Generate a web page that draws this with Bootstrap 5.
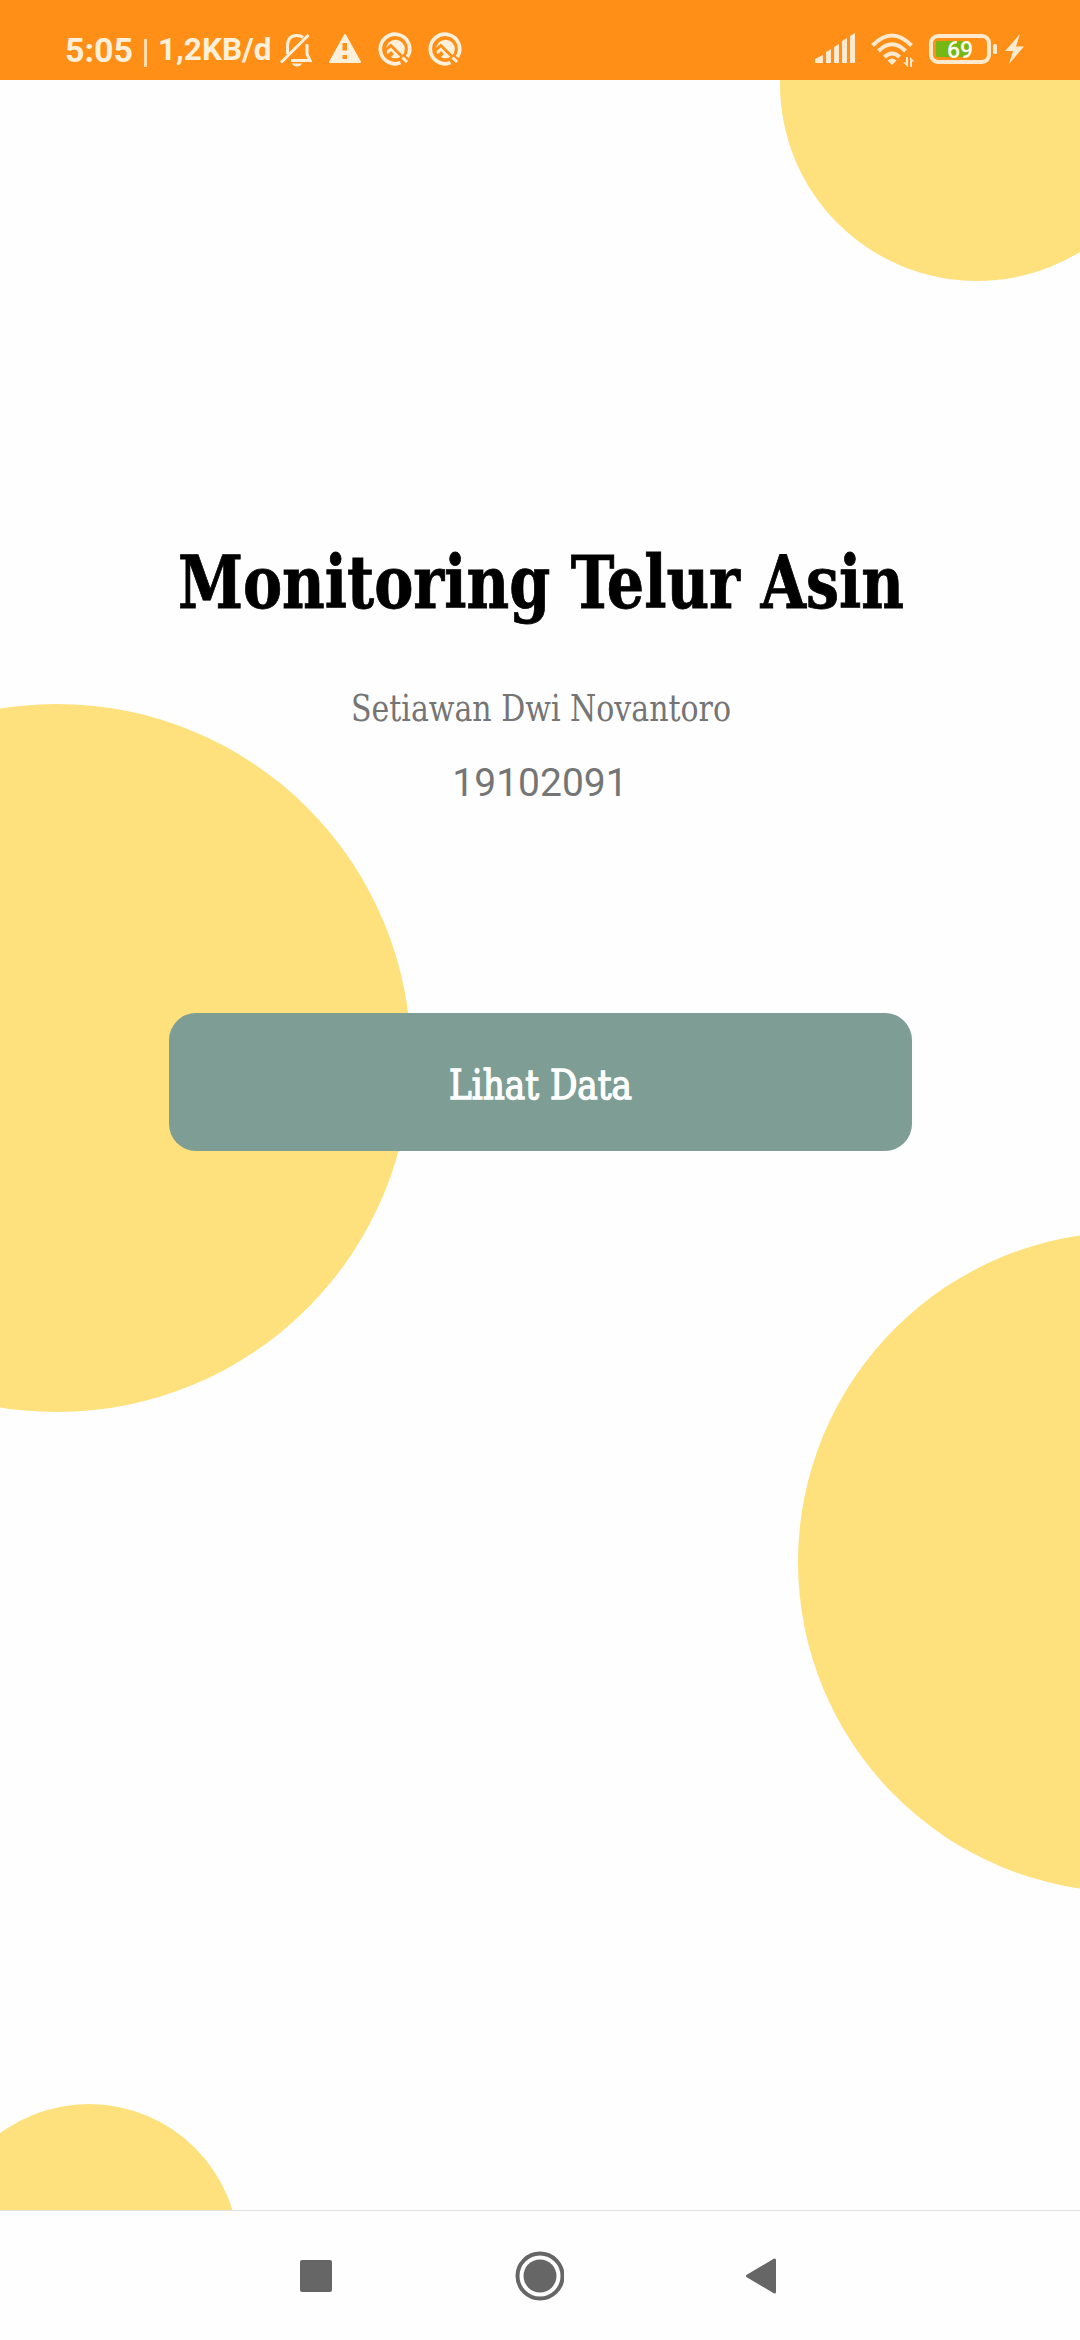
<!DOCTYPE html>
<html lang="id">
<head>
<meta charset="utf-8">
<meta name="viewport" content="width=device-width, initial-scale=1">
<title>Monitoring Telur Asin</title>
<link href="https://cdn.jsdelivr.net/npm/bootstrap@5.3.0/dist/css/bootstrap.min.css" rel="stylesheet">
<style>
  body { font-family: Roboto, "Liberation Sans", sans-serif; background: #fefefe; }
  .status-bar { height: 80px; background: #ff8f17; color: #fff0dc; padding: 0 54px 0 65px; }
  .status-bar svg { display: block; height: 80px; }
  .clock, .speed { height: 80px; padding-top: 20px; line-height: 60px; font-weight: 700; white-space: nowrap; }
  .clock { font-size: 34px; width: 79px; }
  .speed { font-size: 31.5px; width: 117px; }
  .divider { width: 3px; height: 28px; background: #ffdcae; margin: 39px 11px 0 0; }
  .blob { position: absolute; border-radius: 50%; background: #fee17c; }
  .blob-top { width: 394px; height: 394px; left: 780px; top: -193px; }
  .blob-left { width: 708px; height: 708px; left: -297px; top: 624px; }
  .blob-right { width: 660px; height: 660px; left: 798px; top: 1152px; }
  .blob-bottom { width: 300px; height: 300px; left: -61px; top: 2024px; }
  .slab { font-family: "DejaVu Serif Condensed", "DejaVu Serif", serif; font-stretch: condensed; white-space: nowrap; }
  .app-title, .owner { line-height: 1; }
  .content-box { padding-top: 446px; }
  .app-title svg, .owner svg, .btn-data svg { display: block; overflow: visible; }
  .owner { margin-top: 62px; }
  .student-id { font-size: 39px; color: #757575; line-height: 46px; margin-top: 26px; }
  .btn-data { width: 743px; height: 138px; border-radius: 27px; background: #7d9d95; border: 0; margin-top: 207px; padding: 0; }
  .btn-data:hover { background: #7d9d95; }
  .nav-keys { height: 130px; border-top: 1px solid #e1e1e1; background: #fefefe; padding: 0 303px 0 300px; }
</style>
</head>
<body>
<div class="d-flex flex-column vh-100 overflow-hidden">
  <header class="status-bar d-flex flex-shrink-0">
    <div class="clock">5:05</div>
    <div class="divider"></div>
    <div class="speed">1,2KB/d</div>
    <svg width="196" viewBox="275 0 196 80" fill="none" stroke="#fff0dc">
      <path d="M287.500 54V46C287.500 38.500 291 35.500 297 35.500C299.500 35.500 301.500 36.200 303 37.500M307 44V54L310 60.500H291" stroke-width="3"/>
      <path d="M281 62.500L308.500 35" stroke-width="3"/>
      <path d="M292 63.500h10q-1.500 3-5 3t-5-3z" fill="#fff0dc" stroke="none"/>
      <path d="M345 35L360 62H330Z" fill="#fff0dc" stroke-width="2" stroke-linejoin="round"/>
      <path d="M342.500 43h4.500v7.500h-4.500zM342.500 55h4.500v4h-4.500z" fill="#ff8f17" stroke="none"/>
      <g id="q-mark">
        <path d="M400.500 62.600A14.700 14.700 0 1 1 407.300 57" stroke-width="3.700"/>
        <circle cx="395.500" cy="49" r="9.300" fill="#fff0dc" stroke="none"/>
        <path d="M384 51.500L390.800 45.500L406 60.500" stroke="#ff8f17" stroke-width="2.800"/>
        <path d="M385 57L391 51L394 54L389 59Z" fill="#ff8f17" stroke="none"/>
        <path d="M402.500 57.500L407 62" stroke-width="3"/>
      </g>
      <use href="#q-mark" x="50"/>
    </svg>
    <svg class="ms-auto" width="213" viewBox="813 0 213 80" fill="#ffead0">
      <path d="M815 63v-4l8-4v8zM826 63V52l5-3v14zM834 63V47l5-3v19zM842 63V41l5-3v25zM850 63V36l5-3v30z"/>
      <g fill="none" stroke="#ffead0" stroke-width="4">
        <path d="M872.500 45.500Q892 25.500 911.500 45.500"/>
        <path d="M878.500 51Q892 37.500 905.500 51"/>
        <path d="M884.500 57Q892 50 899.500 57"/>
      </g>
      <path d="M887.500 60.500q4.500-4 9 0l-4.500 4.500zM906 57h2v10l-5-4.500h3zM910 67v-10l4.500 4.500h-2.500v5.500z"/>
      <rect x="931" y="36" width="58" height="26" rx="7" fill="none" stroke="#ffead0" stroke-width="4"/>
      <rect x="936" y="41" width="33" height="16" rx="1" fill="#76b813"/>
      <rect x="993" y="44" width="4" height="10" rx="1.500"/>
      <text x="960" y="58" text-anchor="middle" font-size="23" font-weight="500" font-family="Roboto, sans-serif" fill="#fffdf0">69</text>
      <path d="M1020 34L1005 51h8l-4 13 15-17.500h-8z"/>
    </svg>
  </header>

  <main class="position-relative flex-grow-1 overflow-hidden">
    <div class="blob blob-top"></div>
    <div class="blob blob-left"></div>
    <div class="blob blob-right"></div>
    <div class="blob blob-bottom"></div>
    <div class="content-box position-relative d-flex flex-column align-items-center">
      <h1 class="app-title m-0">
        <svg class="slab" width="723" height="106" viewBox="0 0 723 106">
          <text x="-1" y="82" font-size="73" font-weight="700" stroke="#000" stroke-width=".8" textLength="726" lengthAdjust="spacingAndGlyphs">Monitoring Telur Asin</text>
        </svg>
      </h1>
      <div class="owner">
        <svg class="slab" width="377" height="40" viewBox="0 0 377 40">
          <text x="-1" y="27" font-size="37" fill="#757575" textLength="380" lengthAdjust="spacingAndGlyphs">Setiawan Dwi Novantoro</text>
        </svg>
      </div>
      <div class="student-id">19102091</div>
      <button type="button" class="btn btn-data d-flex align-items-center justify-content-center">
        <svg class="slab" width="181" height="44" viewBox="0 0 181 44">
          <text x="-1" y="39" font-size="41.500" fill="#fff" stroke="#fff" stroke-width="1.300" textLength="183" lengthAdjust="spacingAndGlyphs">Lihat Data</text>
        </svg>
      </button>
    </div>
  </main>

  <nav class="nav-keys d-flex align-items-center justify-content-between flex-shrink-0">
    <svg width="32" height="32"><rect width="32" height="32" rx="2" fill="#666"/></svg>
    <svg width="50" height="50"><circle cx="26" cy="25" r="22.500" fill="none" stroke="#666" stroke-width="4"/><circle cx="26" cy="25" r="16.500" fill="#666"/></svg>
    <svg width="32" height="38"><path d="M2.500 19L29.500 3V35Z" fill="#666" stroke="#666" stroke-width="3" stroke-linejoin="round"/></svg>
  </nav>
</div>
<script src="https://cdn.jsdelivr.net/npm/bootstrap@5.3.0/dist/js/bootstrap.bundle.min.js"></script>
</body>
</html>
